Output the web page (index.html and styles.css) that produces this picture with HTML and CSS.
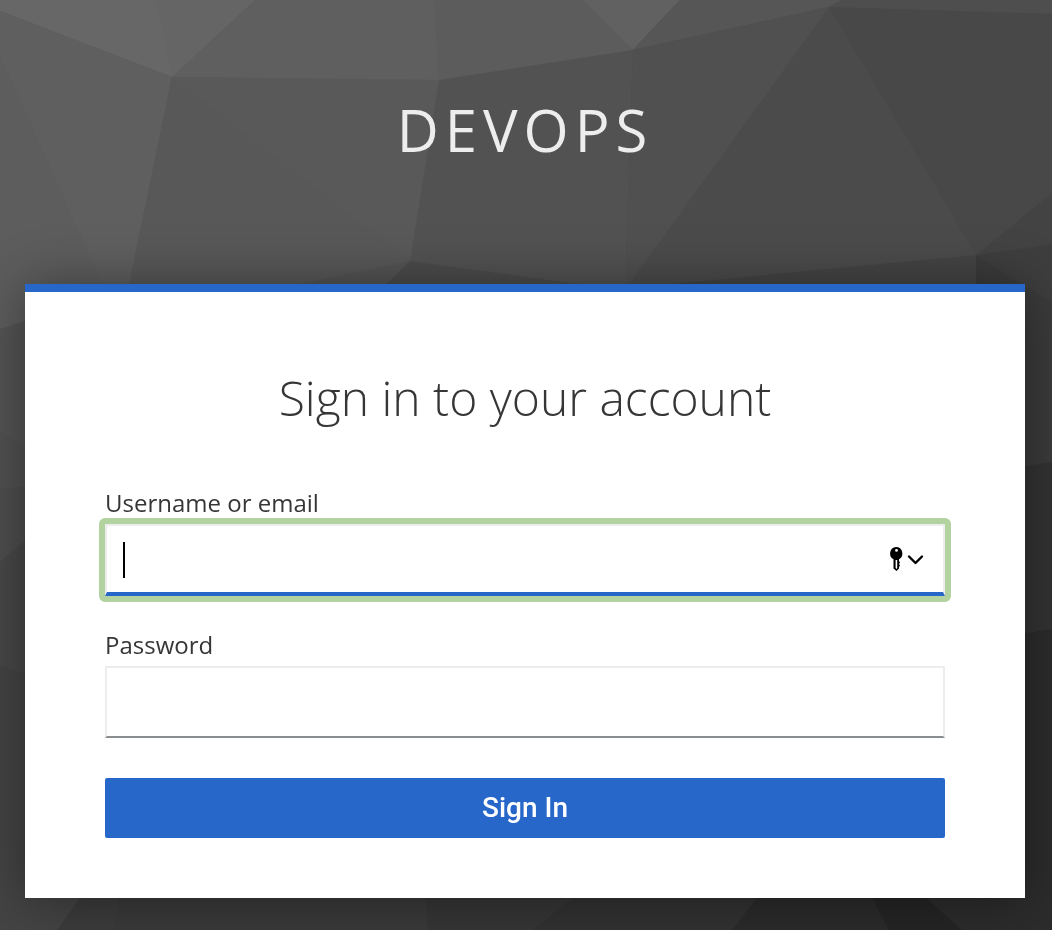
FILE: index.html
```html
<!DOCTYPE html>
<html lang="en">
<head>
<meta charset="utf-8">
<meta name="viewport" content="width=device-width, initial-scale=1">
<title>Sign in to DevOps</title>
<link rel="stylesheet" href="styles.css">
</head>
<body>
<svg class="backdrop" viewBox="0 0 1052 930" preserveAspectRatio="none" aria-hidden="true">
  <rect width="1052" height="930" fill="#4a4a4a"/>
  <path fill="#5d5d5d" d="M0 0H640L626 290L0 340Z"/>
  <path fill="#4d4d4d" d="M633 0H1052V260H600Z"/>
  <path fill="#676767" d="M0 0H255L172 77L0 11Z"/>
  <path fill="#656565" d="M156 0H255L172 77Z"/>
  <path fill="#5f5f5f" d="M0 11L172 77L128 290L100 340H0Z"/>
  <path fill="#5d5d5d" d="M0 55L105 290L100 340H0Z"/>
  <path fill="#5f5f5f" d="M255 0H434L439 80L172 77Z"/>
  <path fill="#595959" d="M172 77L439 80L410 261L300 290H128Z"/>
  <path fill="#585858" d="M172 77L410 261L260 290H128Z"/>
  <path fill="#5c5c5c" d="M434 0H583L633 50L439 80Z"/>
  <path fill="#616161" d="M583 0H680L633 50Z"/>
  <path fill="#565656" d="M680 0H842L829 7L633 50Z"/>
  <path fill="#4e4e4e" d="M842 0H1052V14L829 7Z"/>
  <path fill="#525252" d="M439 80L633 50L625 290L410 261Z"/>
  <path fill="#505050" d="M633 50L829 7L835 20L640 290H625Z"/>
  <path fill="#4b4b4b" d="M829 7L976 255L625 290Z"/>
  <path fill="#484848" d="M829 7L1052 14V193L976 255Z"/>
  <path fill="#434343" d="M976 255L1052 193V244Z"/>
  <path fill="#545454" d="M270 290L410 261L380 290Z"/>
  <path fill="#4b4b4b" d="M380 290L410 261L625 290Z"/>
  <path fill="#444444" d="M660 285L976 255L980 300H660Z"/>
  <path fill="#3e3e3e" d="M976 255L1052 244V470H978Z"/>
  <path fill="#3b3b3b" d="M976 255L1052 303V470H978Z"/>
  <path fill="#545454" d="M0 329L60 310V466L0 440Z"/>
  <path fill="#515151" d="M0 432L60 466V490H0Z"/>
  <path fill="#4e4e4e" d="M0 489L60 484V510L0 562Z"/>
  <path fill="#484848" d="M0 562L60 510V690L0 665Z"/>
  <path fill="#444444" d="M0 665L60 686V930H0Z"/>
  <path fill="#444444" d="M58 884H95L57 930H50Z"/>
  <path fill="#333333" d="M1000 470L1052 462V628L1000 638Z"/>
  <path fill="#2c2c2c" d="M1000 638L1052 628V930H1000Z"/>
  <path fill="#3c3c3c" d="M90 884L57 930H430V884Z"/>
  <path fill="#3a3a3a" d="M122 884L114 930H430V884Z"/>
  <path fill="#363636" d="M425 884L428 930H540L600 884Z"/>
  <path fill="#323232" d="M590 884L533 930H740L780 884Z"/>
  <path fill="#2b2b2b" d="M768 884L732 930H895L875 884Z"/>
  <path fill="#252525" d="M865 884L889 930H970L920 884Z"/>
  <path fill="#2c2c2c" d="M910 884L962 930H1052V884Z"/>
</svg>
<div class="page">
  <header class="brand">DEVOPS</header>
  <main class="card">
    <h1 class="title">Sign in to your account</h1>
    <form class="form">
      <div class="field">
        <label class="label" for="username">Username or email</label>
        <div class="control control-active">
          <input class="input" id="username" name="username" type="text" autocomplete="username">
          <span class="caret"></span>
          <button class="keys" type="button" aria-label="Saved passwords">
            <svg width="36" height="28" viewBox="0 0 36 28" aria-hidden="true">
              <path fill="#000" fill-rule="evenodd" d="M8 2a6.500 6.500 0 0 1 3 12.200V16l1 1.500-1 1.500 1 1.500-1 1.500v1.500L8.500 26 5.500 23.500v-9.300A6.500 6.500 0 0 1 8 2ZM8.500 4a1.400 1.400 0 1 0 0 2.800 1.400 1.400 0 0 0 0-2.800ZM7.600 15v8l1 1 .6-1v-8Z"/>
              <path fill="none" stroke="#000" stroke-width="2.400" stroke-linecap="round" stroke-linejoin="round" d="m21 11.500 6.500 6.500 6.500-6.500"/>
            </svg>
          </button>
        </div>
      </div>
      <div class="field">
        <label class="label" for="password">Password</label>
        <div class="control">
          <input class="input" id="password" name="password" type="password" autocomplete="current-password">
        </div>
      </div>
      <button class="submit" type="submit">Sign In</button>
    </form>
  </main>
</div>
</body>
</html>
```
FILE: styles.css
```css
* {
  box-sizing: border-box;
}

body {
  margin: 0;
  min-height: 100vh;
  background: #434343;
  color: #363636;
  font-family: "Open Sans", "Noto Sans", sans-serif;
}

.backdrop {
  position: fixed;
  inset: 0;
  z-index: -1;
  width: 100%;
  height: 100%;
}

.page {
  padding: 92px 27px 32px 25px;
}

.brand {
  margin-bottom: 116px;
  color: #ededed;
  font-size: 58px;
  line-height: 76px;
  letter-spacing: 6px;
  text-align: center;
}

.card {
  max-width: 1000px;
  margin: 0 auto;
  padding: 72px 80px 60px;
  border-top: 8px solid #2667c9;
  background: #fff;
  box-shadow: 0 2px 50px rgba(0, 0, 0, 0.4);
}

.title {
  margin: 0 0 52px;
  font-size: 48px;
  font-weight: 300;
  line-height: 68px;
  text-align: center;
}

.form {
  display: flex;
  flex-direction: column;
}

.field {
  margin-bottom: 30px;
}

.field + .field {
  margin-bottom: 40px;
}

.label {
  display: block;
  padding-bottom: 2px;
  font-size: 24px;
  line-height: 38px;
}

.control {
  position: relative;
  display: flex;
}

.input {
  width: 100%;
  height: 72px;
  padding: 8px 72px 8px 16px;
  border: 2px solid #ededed;
  border-bottom-color: #8a8d90;
  border-radius: 0;
  outline: 0;
  background: #fff;
  color: #151515;
  font: inherit;
  font-size: 24px;
}

.control-active .input {
  border-bottom: 4px solid #2667c9;
}

/* Focus ring with rounded outer corners and square inner ones */
.control-active::before {
  content: "";
  position: absolute;
  inset: -6px;
  border: 6px solid #b2d3a0;
  border-radius: 6px;
  pointer-events: none;
}

.caret {
  position: absolute;
  top: 18px;
  left: 18px;
  width: 2px;
  height: 36px;
  background: #000;
}

.keys {
  position: absolute;
  top: 21px;
  right: 21px;
  display: flex;
  padding: 0;
  border: 0;
  background: none;
}

.submit {
  width: 100%;
  height: 60px;
  padding: 0;
  border: 0;
  border-radius: 2px;
  background: #2667c9;
  color: #fff;
  font-family: Roboto, "Open Sans", sans-serif;
  font-size: 28px;
  font-weight: 500;
  line-height: 36px;
}
```
